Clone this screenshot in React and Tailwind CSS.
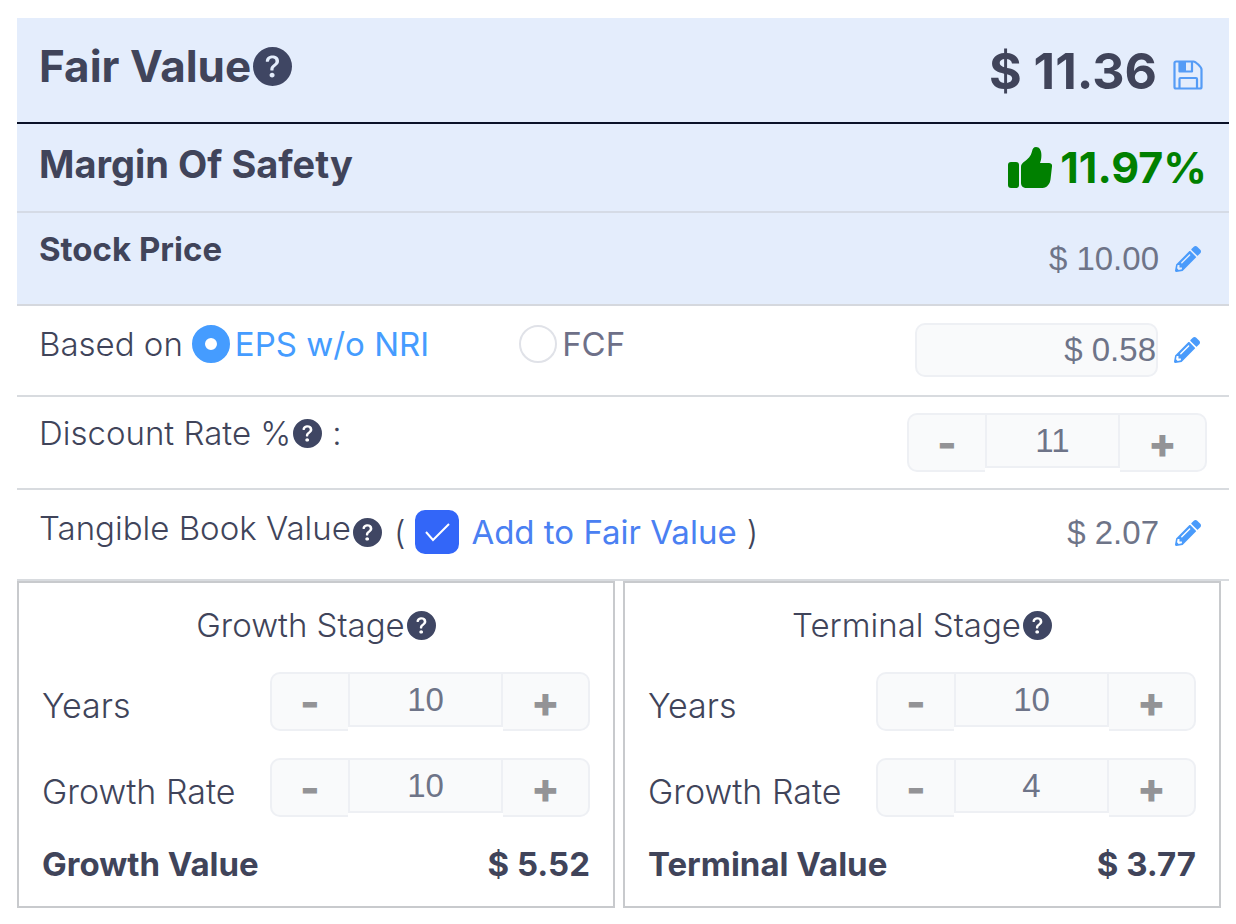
import React, { useState } from 'react';
import { BsQuestionCircleFill } from 'react-icons/bs';
import { FaPencilAlt } from 'react-icons/fa';

const Help = ({ size = 29 }) => (
  <button type="button" aria-label="Help" className="ml-[2px] shrink-0 text-[#3f4663]">
    <BsQuestionCircleFill size={size} />
  </button>
);

const EditButton = ({ label }) => (
  <button type="button" aria-label={label} className="ml-4 w-8 shrink-0 text-[#4a9bfb]">
    <FaPencilAlt size={26} />
  </button>
);

const SaveIcon = () => (
  <svg width="30" height="30" viewBox="0 0 30 30" fill="none" stroke="currentColor" strokeWidth="2.2" strokeLinejoin="round">
    <path d="M3 1.500h17.500c2 0 8 5.500 8 8V27a1.500 1.500 0 0 1-1.500 1.500H3A1.500 1.500 0 0 1 1.500 27V3A1.500 1.500 0 0 1 3 1.500z" />
    <path d="M6.500 2v9.500h12.500V2M6.500 28v-9a1 1 0 0 1 1-1h15.500a1 1 0 0 1 1 1v9" />
    <path d="M6 2h7v10H6z" fill="currentColor" stroke="none" />
  </svg>
);

const ThumbUp = () => (
  <svg width="44" height="42" viewBox="0 0 44 42" fill="currentColor">
    <rect x="0" y="15" width="11" height="26" rx="3" />
    <path d="M13 20c0-2 .8-3.200 2.200-4.400C20 12 23 9 24 4.500 24.600 1.500 25.600 0 28 0c3.600 0 5.400 3.500 5.400 8 0 3-.4 5.500-1.400 8h9c2.300 0 3.300 1.600 3 3.600l-1.500 13C42 37 39 41 34.500 41H19c-4 0-6-2-6-5z" />
  </svg>
);

const Stepper = ({ id, label, value, onChange, wide = false }) => (
  <div className={`flex h-[59px] items-start ${wide ? 'w-[320px]' : 'w-[300px]'}`}>
    <button
      type="button"
      aria-label={`Decrease ${label}`}
      onClick={() => onChange(value - 1)}
      className="h-[59px] w-[78px] rounded-l-[10px] border-2 border-r-0 border-[#eef0f4] bg-[#f9fafb] text-[42px] leading-[50px] font-extrabold text-[#939396]"
    >
      -
    </button>
    <input
      id={id}
      type="text"
      aria-label={label}
      value={value}
      onChange={(e) => onChange(Number(e.target.value) || 0)}
      className="h-[55px] min-w-0 flex-1 border-2 border-[#eef0f4] bg-[#f9fafb] text-center font-['Liberation_Sans',sans-serif] text-[33px] text-[#6e7488] outline-none"
    />
    <button
      type="button"
      aria-label={`Increase ${label}`}
      onClick={() => onChange(value + 1)}
      className="h-[59px] w-[87px] rounded-r-[10px] border-2 border-l-0 border-[#eef0f4] bg-[#f9fafb] text-[42px] leading-[50px] font-extrabold text-[#939396]"
    >
      +
    </button>
  </div>
);

const StagePanel = ({ name, id, initialYears, initialRate, total }) => {
  const [years, setYears] = useState(initialYears);
  const [rate, setRate] = useState(initialRate);

  return (
    <section className="border-2 border-[#c8cacd] px-[23px] pt-5 pb-[22px]">
      <h2 className="flex items-center justify-center text-[33px] leading-[44px] font-light">
        {name} Stage<Help />
      </h2>
      <div className="mt-[25px] flex items-end justify-between">
        <label htmlFor={`${id}-years`} className="text-[34px] leading-[50px] font-light">Years</label>
        <Stepper wide id={`${id}-years`} label="Years" value={years} onChange={setYears} />
      </div>
      <div className="mt-[27px] flex items-end justify-between">
        <label htmlFor={`${id}-rate`} className="text-[34px] leading-[50px] font-light">Growth Rate</label>
        <Stepper wide id={`${id}-rate`} label="Growth Rate" value={rate} onChange={setRate} />
      </div>
      <div className="mt-[27px] flex justify-between text-[33px] leading-[40px] font-bold">
        <span>{name} Value</span>
        <span>$ {total}</span>
      </div>
    </section>
  );
};

export default function App() {
  const [basis, setBasis] = useState('eps');
  const [addToFair, setAddToFair] = useState(true);
  const [discount, setDiscount] = useState(11);

  return (
    <main className="bg-white pt-[18px] pr-[7px] pb-4 pl-[17px] font-['Inter',sans-serif] text-[#40445a]">
      <div className="bg-[#e4edfc]">
        <div className="flex justify-between border-b-2 border-[#0a1128] pt-4 pr-6 pb-[14px] pl-[22px] font-bold">
          <h1 className="flex items-center self-start text-[44px] leading-[64px]">
            Fair Value<Help size={39} />
          </h1>
          <div className="flex items-center text-[50px] leading-[74px]">
            $ 11.36
            <button type="button" aria-label="Save" className="mt-2 ml-4 w-8 text-[#559cf6]"><SaveIcon /></button>
          </div>
        </div>

        <div className="flex justify-between border-b-2 border-[#d5dbe6] py-4 pr-[22px] pl-[22px] font-bold">
          <h2 className="text-[38px] leading-[48px]">Margin Of Safety</h2>
          <div className="flex items-center gap-2 text-[43px] leading-[55px] text-[#008000]">
            <ThumbUp />11.97%
          </div>
        </div>

        <div className="flex justify-between border-b-2 border-[#d5d8de] py-4 pr-[22px] pl-[22px]">
          <h2 className="text-[33px] leading-[40px] font-bold">Stock Price</h2>
          <div className="flex items-center font-['Liberation_Sans',sans-serif] text-[33px] leading-[59px] text-[#6e7488]">
            $ 10.00<EditButton label="Edit stock price" />
          </div>
        </div>
      </div>

      <div className="flex justify-between border-b-2 border-[#d8dbdf] pt-[17px] pr-[23px] pb-[18px] pl-[22px]">
        <div className="flex items-center self-start text-[33px] leading-[42px]">
          <span className="font-light">Based on</span>
          <label className={`ml-[9px] flex items-center gap-[5px] ${basis === 'eps' ? 'text-[#459cff]' : 'text-[#6e7088]'}`}>
            <input type="radio" name="basis" checked={basis === 'eps'} onChange={() => setBasis('eps')}
              className="size-[38px] appearance-none rounded-full border-2 border-[#e0e2e8] bg-white checked:border-[13px] checked:border-[#459cff]" />
            EPS w/o NRI
          </label>
          <label className={`ml-[90px] flex items-center gap-[5px] ${basis === 'fcf' ? 'text-[#459cff]' : 'text-[#6e7088]'}`}>
            <input type="radio" name="basis" checked={basis === 'fcf'} onChange={() => setBasis('fcf')}
              className="size-[38px] appearance-none rounded-full border-2 border-[#e0e2e8] bg-white checked:border-[13px] checked:border-[#459cff]" />
            FCF
          </label>
        </div>
        <div className="flex items-center">
          <input type="text" aria-label="EPS without NRI" readOnly value="$ 0.58"
            className="h-[54px] w-[243px] rounded-[10px] border-2 border-[#eef0f4] bg-[#f9fafb] text-right font-['Liberation_Sans',sans-serif] text-[33px] text-[#6e7488] outline-none" />
          <EditButton label="Edit EPS" />
        </div>
      </div>

      <div className="flex justify-between border-b-2 border-[#d8dbdf] py-4 pr-[22px] pl-[22px]">
        <label htmlFor="discount" className="flex items-center self-start text-[33px] leading-[40px] font-light">
          Discount Rate %<Help /><span className="ml-[10px]">:</span>
        </label>
        <Stepper id="discount" label="Discount Rate" value={discount} onChange={setDiscount} />
      </div>

      <div className="flex justify-between border-b-2 border-[#d8dbdf] pt-4 pr-[22px] pb-[19px] pl-[22px]">
        <div className="flex items-start text-[33px] leading-[52px]">
          <span className="leading-[44px] font-light">Tangible Book Value</span>
          <span className="flex h-[52px] items-center"><Help /></span>
          <span className="ml-3 font-light">(</span>
          <label className="ml-[10px] flex items-center gap-3 text-[#4a80f2]">
            <span className="relative size-[44px]">
              <input type="checkbox" checked={addToFair} onChange={() => setAddToFair(!addToFair)}
                className="block size-[44px] appearance-none rounded-[10px] border-2 border-[#3366f8] checked:bg-[#3366f8]" />
              <svg className="pointer-events-none absolute inset-0" width="44" height="44" viewBox="0 0 44 44" fill="none" stroke="white" strokeWidth="2">
                <path d="M11 22l7 8 16-16" />
              </svg>
            </span>
            Add to Fair Value
          </label>
          <span className="ml-[10px] font-light">)</span>
        </div>
        <div className="flex items-center font-['Liberation_Sans',sans-serif] text-[33px] leading-[54px] text-[#6e7488]">
          $ 2.07<EditButton label="Edit tangible book value" />
        </div>
      </div>

      <div className="grid grid-cols-2 gap-2 pr-2">
        <StagePanel name="Growth" id="growth" initialYears={10} initialRate={10} total="5.52" />
        <StagePanel name="Terminal" id="terminal" initialYears={10} initialRate={4} total="3.77" />
      </div>
    </main>
  );
}
